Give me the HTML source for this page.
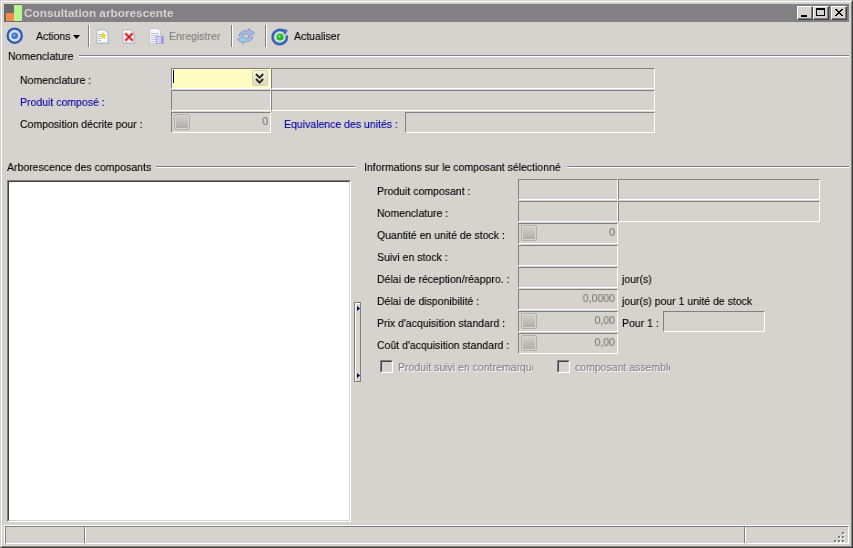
<!DOCTYPE html>
<html><head><meta charset="utf-8">
<style>
*{margin:0;padding:0;box-sizing:border-box}
html,body{width:853px;height:548px;overflow:hidden;background:#d6d3ce}
body{position:relative;-webkit-text-stroke:0.12px currentColor;-webkit-font-smoothing:none;font-family:"Liberation Sans",sans-serif;font-size:10.5px;color:#000}
.a{position:absolute}
.t{position:absolute;white-space:nowrap;line-height:12px;font-size:11.5px;transform:scaleX(0.913);transform-origin:0 0;will-change:transform}
.f{position:absolute;border-top:1px solid #808080;border-left:1px solid #808080;border-bottom:1px solid #fff;border-right:1px solid #fff;background:#d6d3ce}
.hl{position:absolute;height:2px;border-top:1px solid #808080;border-bottom:1px solid #fff}
.b{color:#0000a8}
.g{color:#808080}
.sq{position:absolute;width:16px;height:16px;border:1px solid #b2b0ac;border-radius:2px;background:linear-gradient(#d2d0cc,#adaba8);box-shadow:inset 0 0 0 1px #d8d6d2}
.num{position:absolute;white-space:nowrap;line-height:12px;color:#787878;text-align:right;font-size:11px;transform:scaleX(0.955);transform-origin:100% 0;will-change:transform}
.cb{position:absolute;width:13px;height:13px;border-top:1px solid #808080;border-left:1px solid #808080;border-right:1px solid #fff;border-bottom:1px solid #fff;background:#d6d3ce}
.cb:before{content:"";position:absolute;left:0;top:0;width:11px;height:11px;border-top:1px solid #404040;border-left:1px solid #404040;border-right:1px solid #d6d3ce;border-bottom:1px solid #d6d3ce;box-sizing:border-box}
.dis{position:absolute;white-space:nowrap;line-height:12px;color:#808080;text-shadow:1px 1px 0 #fff;overflow:hidden;font-size:11.5px;transform:scaleX(0.913);transform-origin:0 0;will-change:transform}
.sep{position:absolute;width:2px;height:22px;border-left:1px solid #808080;border-right:1px solid #fff;top:25px}
.cap{position:absolute;top:6px;width:16px;height:14px;background:#d6d3ce;border-top:1px solid #fff;border-left:1px solid #fff;border-right:1px solid #404040;border-bottom:1px solid #404040}
.cap:before{content:"";position:absolute;left:0;top:0;right:0;bottom:0;border-right:1px solid #808080;border-bottom:1px solid #808080}
</style></head><body>
<!-- window frame -->
<div class="a" style="left:0;top:0;width:853px;height:548px;border-top:1px solid #d6d3ce;border-left:1px solid #d6d3ce;border-right:1px solid #404040;border-bottom:1px solid #404040"></div>
<div class="a" style="left:1px;top:1px;width:851px;height:546px;border-top:1px solid #fff;border-left:1px solid #fff;border-right:1px solid #808080;border-bottom:1px solid #808080"></div>

<!-- title bar -->
<div class="a" style="left:4px;top:4px;width:845px;height:18px;background:#828085"></div>
<svg class="a" style="left:4px;top:4px" width="18" height="18">
<rect x="0" y="0" width="18" height="18" fill="#6a6a6a"/>
<rect x="2" y="9" width="8" height="8" fill="#f58a4a"/>
<rect x="10" y="1" width="8" height="16" fill="#b6f58c"/>
</svg>
<div class="t" style="left:24px;top:6px;font-weight:bold;font-size:11.8px;color:#d6d3ce;line-height:14px;transform:none;-webkit-text-stroke:0">Consultation arborescente</div>
<div class="cap" style="left:797px"><div class="a" style="left:3px;top:8px;width:6px;height:2px;background:#000"></div></div>
<div class="cap" style="left:813px"><div class="a" style="left:2px;top:1px;width:9px;height:8px;border:1px solid #000;border-top:2px solid #000"></div></div>
<div class="cap" style="left:831px"><svg class="a" style="left:3px;top:2px" width="8" height="7" shape-rendering="crispEdges"><path d="M0 0h2v1h-2zM6 0h2v1h-2zM1 1h2v1h-2zM5 1h2v1h-2zM2 2h4v1h-4zM3 3h2v1h-2zM2 4h4v1h-4zM1 5h2v1h-2zM5 5h2v1h-2zM0 6h2v1h-2zM6 6h2v1h-2z" fill="#000"/></svg></div>

<!-- toolbar -->
<svg class="a" style="left:6px;top:27px" width="18" height="18">
<circle cx="8.7" cy="8.7" r="7.1" fill="#d6dce6" stroke="#2e5cb4" stroke-width="2.3"/>
<circle cx="8.7" cy="8.7" r="3.3" fill="#3a78d8"/>
<circle cx="8.2" cy="8.2" r="1.3" fill="#78a8f0"/>
</svg>
<div class="t" style="left:36px;top:30px">Actions</div>
<svg class="a" style="left:73px;top:35px" width="8" height="4"><path d="M0 0 H7 L3.5 4 Z" fill="#000"/></svg>
<div class="sep" style="left:88px"></div>
<!-- new -->
<svg class="a" style="left:96px;top:28.5px" width="15" height="16">
<path d="M2 2 H9 L13 6 V15 H2 Z" fill="#b8bac8" opacity="0.7"/>
<path d="M1 1 H9 L12 4 V14 H1 Z" fill="#fdfdff" stroke="#aeb4cc" stroke-width="1"/>
<path d="M2.5 5.5 H5 M2.5 7.5 H4 M2.5 9.5 H4 M2.5 11.5 H5" stroke="#98acd4" stroke-width="1"/>
<path d="M7.00 3.40 L7.88 5.69 L10.33 5.82 L8.43 7.36 L9.06 9.73 L7.00 8.40 L4.94 9.73 L5.57 7.36 L3.67 5.82 L6.12 5.69 Z" fill="#f0e010" stroke="#c8b838" stroke-width="0.5"/>
</svg>
<!-- delete -->
<svg class="a" style="left:122px;top:28.5px" width="15" height="16">
<path d="M2 2 H9 L13 6 V15 H2 Z" fill="#b8bac8" opacity="0.7"/>
<path d="M1 1 H9 L12 4 V14 H1 Z" fill="#fdfdff" stroke="#aeb4cc" stroke-width="1"/>
<path d="M3 4 L11 12 M11 4 L3 12" stroke="#f7a0a0" stroke-width="3.2"/>
<path d="M3.5 4.5 L10.5 11.5 M10.5 4.5 L3.5 11.5" stroke="#c41818" stroke-width="1.4"/>
</svg>
<!-- save disabled -->
<svg class="a" style="left:147px;top:27px" width="19" height="19">
<path d="M2.5 1.5 H11 L13.5 4 V16.5 H2.5 Z" fill="#f6f6fa" stroke="#c4c6d2" stroke-width="1"/>
<path d="M4 6.5 H12 M4 8.5 H12 M4 10.5 H11 M4 12.5 H10 M4 14.5 H10" stroke="#bcc4e0" stroke-width="1"/>
<rect x="9.5" y="9.5" width="7" height="7" fill="#d8d8f0" stroke="#a8a8d8" stroke-width="1"/>
<path d="M10 12.5 H14 M10 14.5 H14" stroke="#c8c8ea" stroke-width="1"/>
<rect x="14" y="10" width="2.5" height="6.5" fill="#9a9ade"/>
</svg>
<div class="t g" style="left:169px;top:30px">Enregistrer</div>
<div class="sep" style="left:231px"></div>
<!-- refresh disabled -->
<svg class="a" style="left:236px;top:26px" width="20" height="20">
<path d="M3 10 C3.5 5.5 8 4 12 5 L12.5 2.5 L18.5 7 L12.5 11 L12.2 8.6 C9 7.6 5.5 8.2 3 10 Z" fill="#a4b8e6" stroke="#8a94cc" stroke-width="0.9"/>
<path d="M17 10.5 C16.5 15 12 16.5 8 15.5 L7.5 18 L1.5 13.5 L7.5 9.5 L7.8 11.9 C11 12.9 14.5 12.3 17 10.5 Z" fill="#98cce0" stroke="#8a94cc" stroke-width="0.9"/>
</svg>
<div class="sep" style="left:265px"></div>
<!-- actualiser -->
<svg class="a" style="left:271px;top:27.5px" width="18" height="18">
<path d="M15.7 7.5 A7.1 7.1 0 1 1 12.5 3.0" fill="none" stroke="#3466c0" stroke-width="2.6"/>
<path d="M10.5 0.8 L16.8 2 L13.8 7.6 Z" fill="#3a6cc6"/>
<circle cx="9" cy="9" r="5" fill="#d2ecd2"/>
<circle cx="9" cy="9" r="3.6" fill="#28b428"/>
<circle cx="8.3" cy="8.3" r="1.4" fill="#78e078"/>
</svg>
<div class="t" style="left:294px;top:30px">Actualiser</div>

<!-- Nomenclature group -->
<div class="t" style="left:8px;top:50px">Nomenclature</div>
<div class="hl" style="left:79px;top:55px;width:770px"></div>

<div class="t" style="left:20px;top:74px">Nomenclature :</div>
<div class="t b" style="left:20px;top:96px">Produit composé :</div>
<div class="t" style="left:20px;top:118px">Composition décrite pour :</div>

<div class="f" style="left:171px;top:68px;width:100px;height:21px;background:#fffcc4;box-shadow:inset 1px 0 0 #fbfbf2"></div>
<div class="a" style="left:173px;top:70px;width:1px;height:13px;background:#000"></div>
<div class="sq" style="left:252px;top:70px;border-color:#d4d2b0;background:linear-gradient(#f6f4de,#dcdac2);box-shadow:none"></div>
<svg class="a" style="left:255px;top:72.5px" width="10" height="11"><path d="M1 1 L4.6 4.6 L8.2 1 M1 6 L4.6 9.6 L8.2 6" fill="none" stroke="#2a2a22" stroke-width="1.9"/></svg>
<div class="f" style="left:271px;top:68px;width:384px;height:21px"></div>
<div class="f" style="left:171px;top:90px;width:100px;height:21px"></div>
<div class="f" style="left:271px;top:90px;width:384px;height:21px"></div>
<div class="f" style="left:171px;top:112px;width:100px;height:21px"></div>
<div class="sq" style="left:174px;top:114px"></div>
<div class="num" style="left:200px;top:115px;width:68px">0</div>
<div class="t b" style="left:284px;top:118px">Equivalence des unités :</div>
<div class="f" style="left:405px;top:112px;width:250px;height:21px"></div>

<!-- Arborescence group -->
<div class="t" style="left:7px;top:161px">Arborescence des composants</div>
<div class="hl" style="left:156px;top:166px;width:199px"></div>
<div class="a" style="left:7px;top:180px;width:344px;height:342px;background:#fff;border-top:1px solid #808080;border-left:1px solid #808080;border-right:1px solid #fff;border-bottom:1px solid #fff"></div>
<div class="a" style="left:8px;top:181px;width:342px;height:340px;border-top:1px solid #404040;border-left:1px solid #404040;border-right:1px solid #d6d3ce;border-bottom:1px solid #d6d3ce"></div>

<!-- splitter -->
<div class="a" style="left:354px;top:302px;width:7px;height:80px;border:1px solid #808080;background:#d8d6ce;border-left:1px solid #808080"></div>
<div class="a" style="left:355px;top:303px;width:1px;height:78px;background:#fff"></div>
<div class="a" style="left:355px;top:303px;width:5px;height:1px;background:#fff"></div>
<svg class="a" style="left:357px;top:306px" width="3" height="5"><path d="M0 0 L3 2.5 L0 5 Z" fill="#000060"/></svg>
<svg class="a" style="left:357px;top:373px" width="3" height="5"><path d="M0 0 L3 2.5 L0 5 Z" fill="#000060"/></svg>

<!-- Informations group -->
<div class="t" style="left:364px;top:161px">Informations sur le composant sélectionné</div>
<div class="hl" style="left:567px;top:166px;width:282px"></div>

<div class="t" style="left:377px;top:185px">Produit composant :</div>
<div class="t" style="left:377px;top:207px">Nomenclature :</div>
<div class="t" style="left:377px;top:229px">Quantité en unité de stock :</div>
<div class="t" style="left:377px;top:251px">Suivi en stock :</div>
<div class="t" style="left:377px;top:273px">Délai de réception/réappro. :</div>
<div class="t" style="left:377px;top:295px">Délai de disponibilité :</div>
<div class="t" style="left:377px;top:317px">Prix d'acquisition standard :</div>
<div class="t" style="left:377px;top:339px">Coût d'acquisition standard :</div>

<div class="f" style="left:518px;top:179px;width:100px;height:21px"></div>
<div class="f" style="left:618px;top:179px;width:202px;height:21px"></div>
<div class="f" style="left:518px;top:201px;width:100px;height:21px"></div>
<div class="f" style="left:618px;top:201px;width:202px;height:21px"></div>
<div class="f" style="left:518px;top:223px;width:100px;height:21px"></div>
<div class="sq" style="left:521px;top:225px"></div>
<div class="num" style="left:540px;top:226px;width:75px">0</div>
<div class="f" style="left:518px;top:245px;width:100px;height:21px"></div>
<div class="f" style="left:518px;top:267px;width:100px;height:21px"></div>
<div class="t" style="left:622px;top:273px">jour(s)</div>
<div class="f" style="left:518px;top:289px;width:100px;height:21px"></div>
<div class="num" style="left:520px;top:292px;width:95px">0,0000</div>
<div class="t" style="left:622px;top:295px">jour(s) pour 1 unité de stock</div>
<div class="f" style="left:518px;top:311px;width:100px;height:21px"></div>
<div class="sq" style="left:521px;top:313px"></div>
<div class="num" style="left:540px;top:314px;width:75px">0,00</div>
<div class="t" style="left:622px;top:317px">Pour 1 :</div>
<div class="f" style="left:663px;top:311px;width:102px;height:21px"></div>
<div class="f" style="left:518px;top:333px;width:100px;height:21px"></div>
<div class="sq" style="left:521px;top:335px"></div>
<div class="num" style="left:540px;top:336px;width:75px">0,00</div>

<div class="cb" style="left:380px;top:360px"></div>
<div class="dis" style="left:398px;top:361px;width:148px">Produit suivi en contremarque</div>
<div class="cb" style="left:557px;top:360px"></div>
<div class="dis" style="left:575px;top:361px;width:104px">composant assemblé</div>

<!-- status bar -->
<div class="a" style="left:4px;top:525px;width:845px;height:19px;border-top:1px solid #fff;border-left:1px solid #fff"></div>
<div class="a" style="left:5px;top:526px;width:844px;height:18px;border-top:1px solid #808080;border-left:1px solid #808080;border-right:1px solid #fff;border-bottom:1px solid #fff"></div>
<div class="sep" style="left:84px;top:527px;height:16px"></div>
<div class="sep" style="left:744px;top:527px;height:16px"></div>
<svg class="a" style="left:834px;top:532px" width="12" height="12" shape-rendering="crispEdges">
<g fill="#fff"><rect x="9" y="1" width="2" height="2"/><rect x="5" y="5" width="2" height="2"/><rect x="9" y="5" width="2" height="2"/><rect x="1" y="9" width="2" height="2"/><rect x="5" y="9" width="2" height="2"/><rect x="9" y="9" width="2" height="2"/></g>
<g fill="#808080"><rect x="8" y="0" width="2" height="2"/><rect x="4" y="4" width="2" height="2"/><rect x="8" y="4" width="2" height="2"/><rect x="0" y="8" width="2" height="2"/><rect x="4" y="8" width="2" height="2"/><rect x="8" y="8" width="2" height="2"/></g>
</svg>
</body></html>
